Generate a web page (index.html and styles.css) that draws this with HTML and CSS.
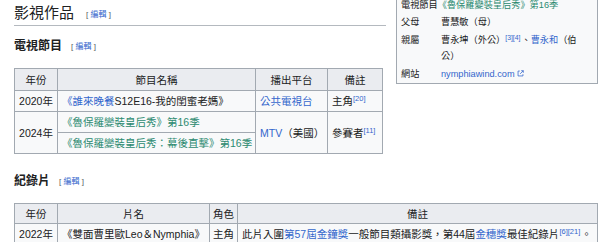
FILE: index.html
```html
<!DOCTYPE html>
<html lang="zh-Hant">
<head>
<meta charset="utf-8">
<title>影視作品</title>
<link rel="stylesheet" href="styles.css">
</head>
<body>
<div class="content">
  <div class="infobox">
    <div class="ib-row ib-full">電視節目<a class="teal">《魯保羅變裝皇后秀》第16季</a></div>
    <div class="ib-row"><div class="ib-label">父母</div><div class="ib-value">曹慧敏（母）</div></div>
    <div class="ib-row"><div class="ib-label">親屬</div><div class="ib-value"><span>曹永坤（外公）</span><sup class="ref">[3][4]</sup><span>、</span><a class="link">曹永和</a><span>（伯</span><br><span>公）</span></div></div>
    <div class="ib-row"><div class="ib-label">網站</div><div class="ib-value"><a class="link">nymphiawind.com</a><svg class="ext" viewBox="0 0 10 10" width="7" height="7"><path d="M4 1.5H1.5v7h7V6" fill="none" stroke="#3366cc" stroke-width="1.1"/><path d="M6 1h3v3M9 1L4.5 5.5" fill="none" stroke="#3366cc" stroke-width="1.1"/></svg></div></div>
  </div>

  <h2 class="h2">影視作品<span class="edit">[ <a class="link">編輯</a> ]</span></h2>

  <h3 class="h3">電視節目<span class="edit">[ <a class="link">編輯</a> ]</span></h3>
  <table class="wikitable tv">
    <colgroup><col class="c-year"><col class="c-name"><col class="c-plat"><col class="c-note"></colgroup>
    <tr><th>年份</th><th>節目名稱</th><th>播出平台</th><th>備註</th></tr>
    <tr><td class="ctr">2020年</td><td><a class="link">《誰來晚餐</a>S12E16-我的閨蜜老媽》</td><td><a class="link">公共電視台</a></td><td>主角<sup class="ref">[20]</sup></td></tr>
    <tr><td class="ctr" rowspan="2">2024年</td><td><a class="teal">《魯保羅變裝皇后秀》第16季</a></td><td rowspan="2"><a class="link">MTV</a>（美國）</td><td rowspan="2">參賽者<sup class="ref">[11]</sup></td></tr>
    <tr><td><a class="teal">《魯保羅變裝皇后秀：幕後直擊》第16季</a></td></tr>
  </table>

  <h3 class="h3 h3-doc">紀錄片<span class="edit">[ <a class="link">編輯</a> ]</span></h3>
  <table class="wikitable doc">
    <colgroup><col class="d-year"><col class="d-name"><col class="d-role"><col class="d-note"></colgroup>
    <tr><th>年份</th><th>片名</th><th>角色</th><th>備註</th></tr>
    <tr><td class="ctr">2022年</td><td>《雙面曹里歐Leo＆Nymphia》</td><td class="ctr role">主角</td><td>此片入圍<a class="link">第57屆金鐘獎</a>一般節目類攝影獎，第44屆<a class="link">金穗獎</a>最佳紀錄片<sup class="ref">[6][21]</sup>。</td></tr>
  </table>
</div>
</body>
</html>
```

FILE: styles.css
```css
html, body {
  margin: 0;
  padding: 0;
  background: #ffffff;
}
body {
  font-family: "Liberation Sans", "Noto Sans CJK TC", sans-serif;
  color: #202122;
  font-size: 10.5px;
  overflow: hidden;
}
.content {
  padding: 0 2px 0 14px;
}
.link { color: #3366cc; text-decoration: none; }
.teal { color: #2b8a70; text-decoration: none; }
.ref {
  color: #3366cc;
  font-size: 7.5px;
  line-height: 1;
  vertical-align: 4px;
  margin: 0 1px 0 0;
}

/* infobox */
.infobox {
  float: right;
  width: 202px;
  box-sizing: border-box;
  margin: -5px 0 10px 10px;
  border: 1px solid #a2a9b1;
  background: #f8f9fa;
  padding: 0 10px 0 4px;
  font-size: 9.2px;
  line-height: 16.5px;
}
.infobox .ref { font-size: 6.8px; vertical-align: 3px; }
.ib-row {
  display: flex;
  padding: 0.5px 0;
}
.ib-label {
  flex: 0 0 40px;
}
.ib-value {
  flex: 1;
}
.ext { margin-left: 2px; vertical-align: 0; }

/* headings */
.h2 {
  margin: 0;
  padding-top: 2px;
  font-size: 15px;
  line-height: 21px;
  font-weight: normal;
  border-bottom: 1px solid #b4b9bf;
  overflow: hidden;
}
.h2 .edit { margin-left: 12px; }
.h3 {
  margin: 12px 0 13px;
  font-size: 12px;
  line-height: 16px;
  font-weight: bold;
}
.h3-doc { margin-top: 19px; }
.edit {
  font-size: 8px;
  font-weight: normal;
  color: #54595d;
  margin-left: 9px;
  vertical-align: 1px;
}

/* tables */
.wikitable {
  border-collapse: collapse;
  table-layout: fixed;
  background: #f8f9fa;
  border: 1px solid #a2a9b1;
}
.wikitable th, .wikitable td {
  border: 1px solid #a2a9b1;
  padding: 3px 4px;
  line-height: 14px;
  height: 14px;
  white-space: nowrap;
  overflow: hidden;
  text-align: left;
}
.wikitable th {
  background: #eaecf0;
  text-align: center;
  font-weight: normal;
  padding-top: 4px;
}
.wikitable td.ctr { text-align: center; }
.tv { width: 368px; }
.c-year { width: 43px; }
.c-name { width: 198px; }
.c-plat { width: 72px; }
.c-note { width: 55px; }

.doc { width: 583px; }
.doc th { padding-top: 3px; padding-bottom: 2px; }
.d-year { width: 43px; }
.d-name { width: 152px; }
.d-role { width: 28px; }
.d-note { width: 360px; }
.doc td.role, .doc th:nth-child(3) { padding-left: 2px; padding-right: 2px; }
```
